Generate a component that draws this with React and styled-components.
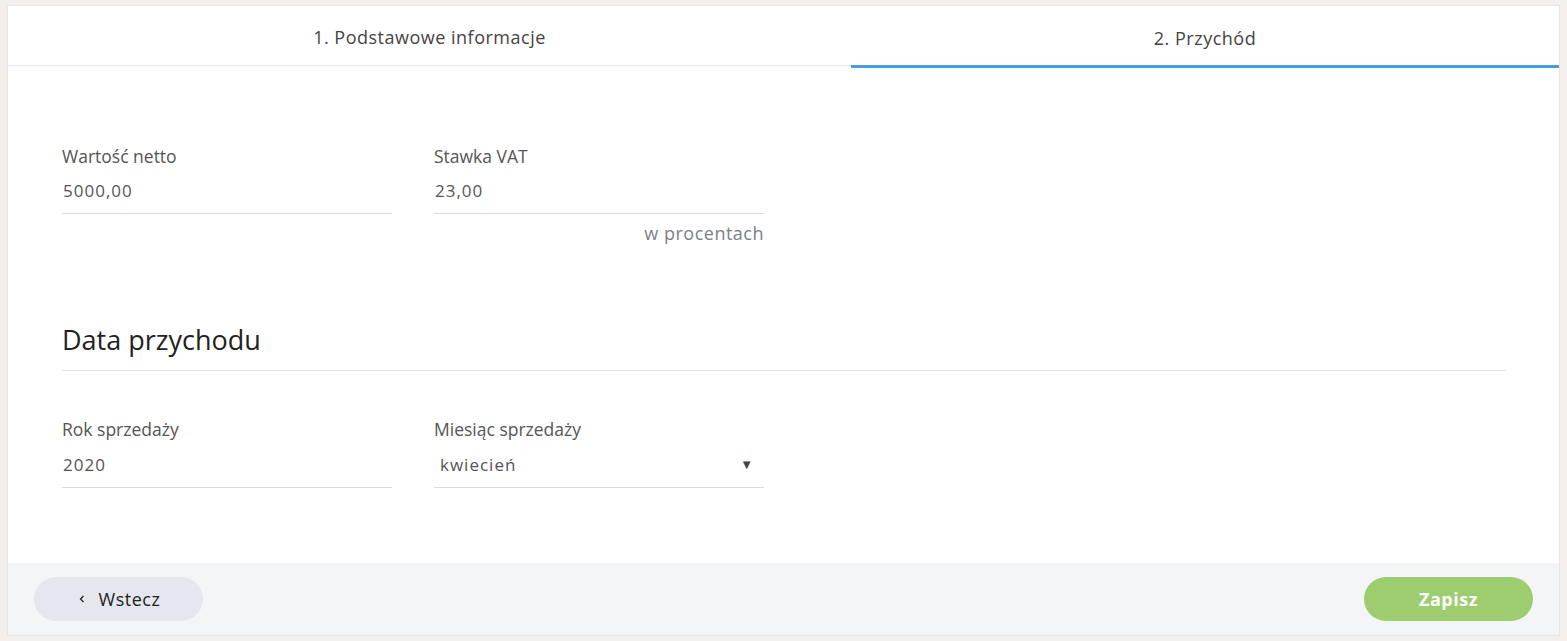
import styled, { createGlobalStyle } from "styled-components";

const GlobalStyle = createGlobalStyle`
  * {
    box-sizing: border-box;
  }
  body {
    margin: 0;
    background: #f2efed;
    font-family: "Open Sans", "Lato", sans-serif;
    color: #333;
  }
`;

export default function App() {
  return (
    <>
      <GlobalStyle />
      <Page>
        <Card>
          <Tabs>
            <Tab>1. Podstawowe informacje</Tab>
            <Tab $active>2. Przychód</Tab>
          </Tabs>
          <Body>
            <FieldRow>
              <Field>
                <Label>Wartość netto</Label>
                <Input defaultValue="5000,00" />
              </Field>
              <Field>
                <Label>Stawka VAT</Label>
                <Input defaultValue="23,00" />
                <Hint>w procentach</Hint>
              </Field>
            </FieldRow>
            <SectionTitle>Data przychodu</SectionTitle>
            <FieldRow>
              <Field>
                <Label>Rok sprzedaży</Label>
                <Input defaultValue="2020" $tall />
              </Field>
              <Field>
                <Label>Miesiąc sprzedaży</Label>
                <SelectBox>
                  <span>kwiecień</span>
                  <Caret>▼</Caret>
                </SelectBox>
              </Field>
            </FieldRow>
          </Body>
          <Footer>
            <BackButton>
              <Chevron viewBox="0 0 10 10">
                <path d="M6.5 2 L3.5 5 L6.5 8" />
              </Chevron>
              Wstecz
            </BackButton>
            <SaveButton>Zapisz</SaveButton>
          </Footer>
        </Card>
      </Page>
    </>
  );
}

const Page = styled.div`
  height: 641px;
  padding: 5px 7px 5px 7px;
`;

const Card = styled.div`
  height: 100%;
  background: #fff;
  border: 1px solid #e3e6ec;
  display: flex;
  flex-direction: column;
`;

const Tabs = styled.div`
  display: grid;
  grid-template-columns: 843fr 708fr;
  height: 60px;
  border-bottom: 1px solid #e6e8ec;
`;

const Tab = styled.div`
  display: flex;
  align-items: center;
  justify-content: center;
  font-size: 18px;
  letter-spacing: 0.5px;
  color: #444;
  height: ${(p) => (p.$active ? "62px" : "59px")};
  border-bottom: ${(p) => (p.$active ? "3px solid #4a9ce0" : "none")};
  padding-top: ${(p) => (p.$active ? "5px" : "2px")};
`;

const Body = styled.div`
  flex: 1;
  padding: 78px 53px 0 54px;
`;

const FieldRow = styled.div`
  display: flex;
  gap: 42px;
`;

const Field = styled.div`
  width: 330px;
  display: flex;
  flex-direction: column;
`;

const Label = styled.label`
  font-size: 17.5px;
  line-height: 24px;
  color: #555;
`;

const Input = styled.input`
  border: none;
  border-bottom: 1px solid #d6dae1;
  height: ${(p) => (p.$tall ? "47px" : "46px")};
  padding: 0 1px;
  font-family: inherit;
  font-size: 17px;
  letter-spacing: 1px;
  color: #555;
  outline: none;
  background: transparent;
`;

const Hint = styled.div`
  align-self: flex-end;
  margin-top: 9px;
  font-size: 18px;
  letter-spacing: 0.5px;
  line-height: 20px;
  color: #7c8089;
`;

const SectionTitle = styled.h2`
  margin: 80px 0 46px;
  padding-bottom: 13px;
  border-bottom: 1px solid #e4e6ea;
  font-weight: 400;
  font-size: 27px;
  line-height: 34px;
  color: #222;
`;

const SelectBox = styled.div`
  display: flex;
  align-items: center;
  justify-content: space-between;
  height: 47px;
  padding: 0 10px 0 6px;
  border-bottom: 1px solid #d6dae1;
  font-size: 17px;
  letter-spacing: 1px;
  color: #555;
`;

const Caret = styled.span`
  font-size: 13px;
  color: #444;
`;

const Footer = styled.div`
  height: 72px;
  background: #f4f5f7;
  display: flex;
  align-items: center;
  justify-content: space-between;
  padding: 0 26px;
`;

const PillButton = styled.button`
  width: 169px;
  height: 44px;
  border: none;
  border-radius: 22px;
  font-family: inherit;
  font-size: 18px;
  letter-spacing: 0.5px;
  display: flex;
  align-items: center;
  justify-content: center;
  cursor: pointer;
`;

const BackButton = styled(PillButton)`
  background: #e4e7ee;
  color: #222;
  gap: 12px;
`;

const SaveButton = styled(PillButton)`
  background: #9ecd6f;
  color: #fff;
  font-weight: 700;
`;

const Chevron = styled.svg`
  width: 10px;
  height: 10px;
  fill: none;
  stroke: #222;
  stroke-width: 1.3;
`;
